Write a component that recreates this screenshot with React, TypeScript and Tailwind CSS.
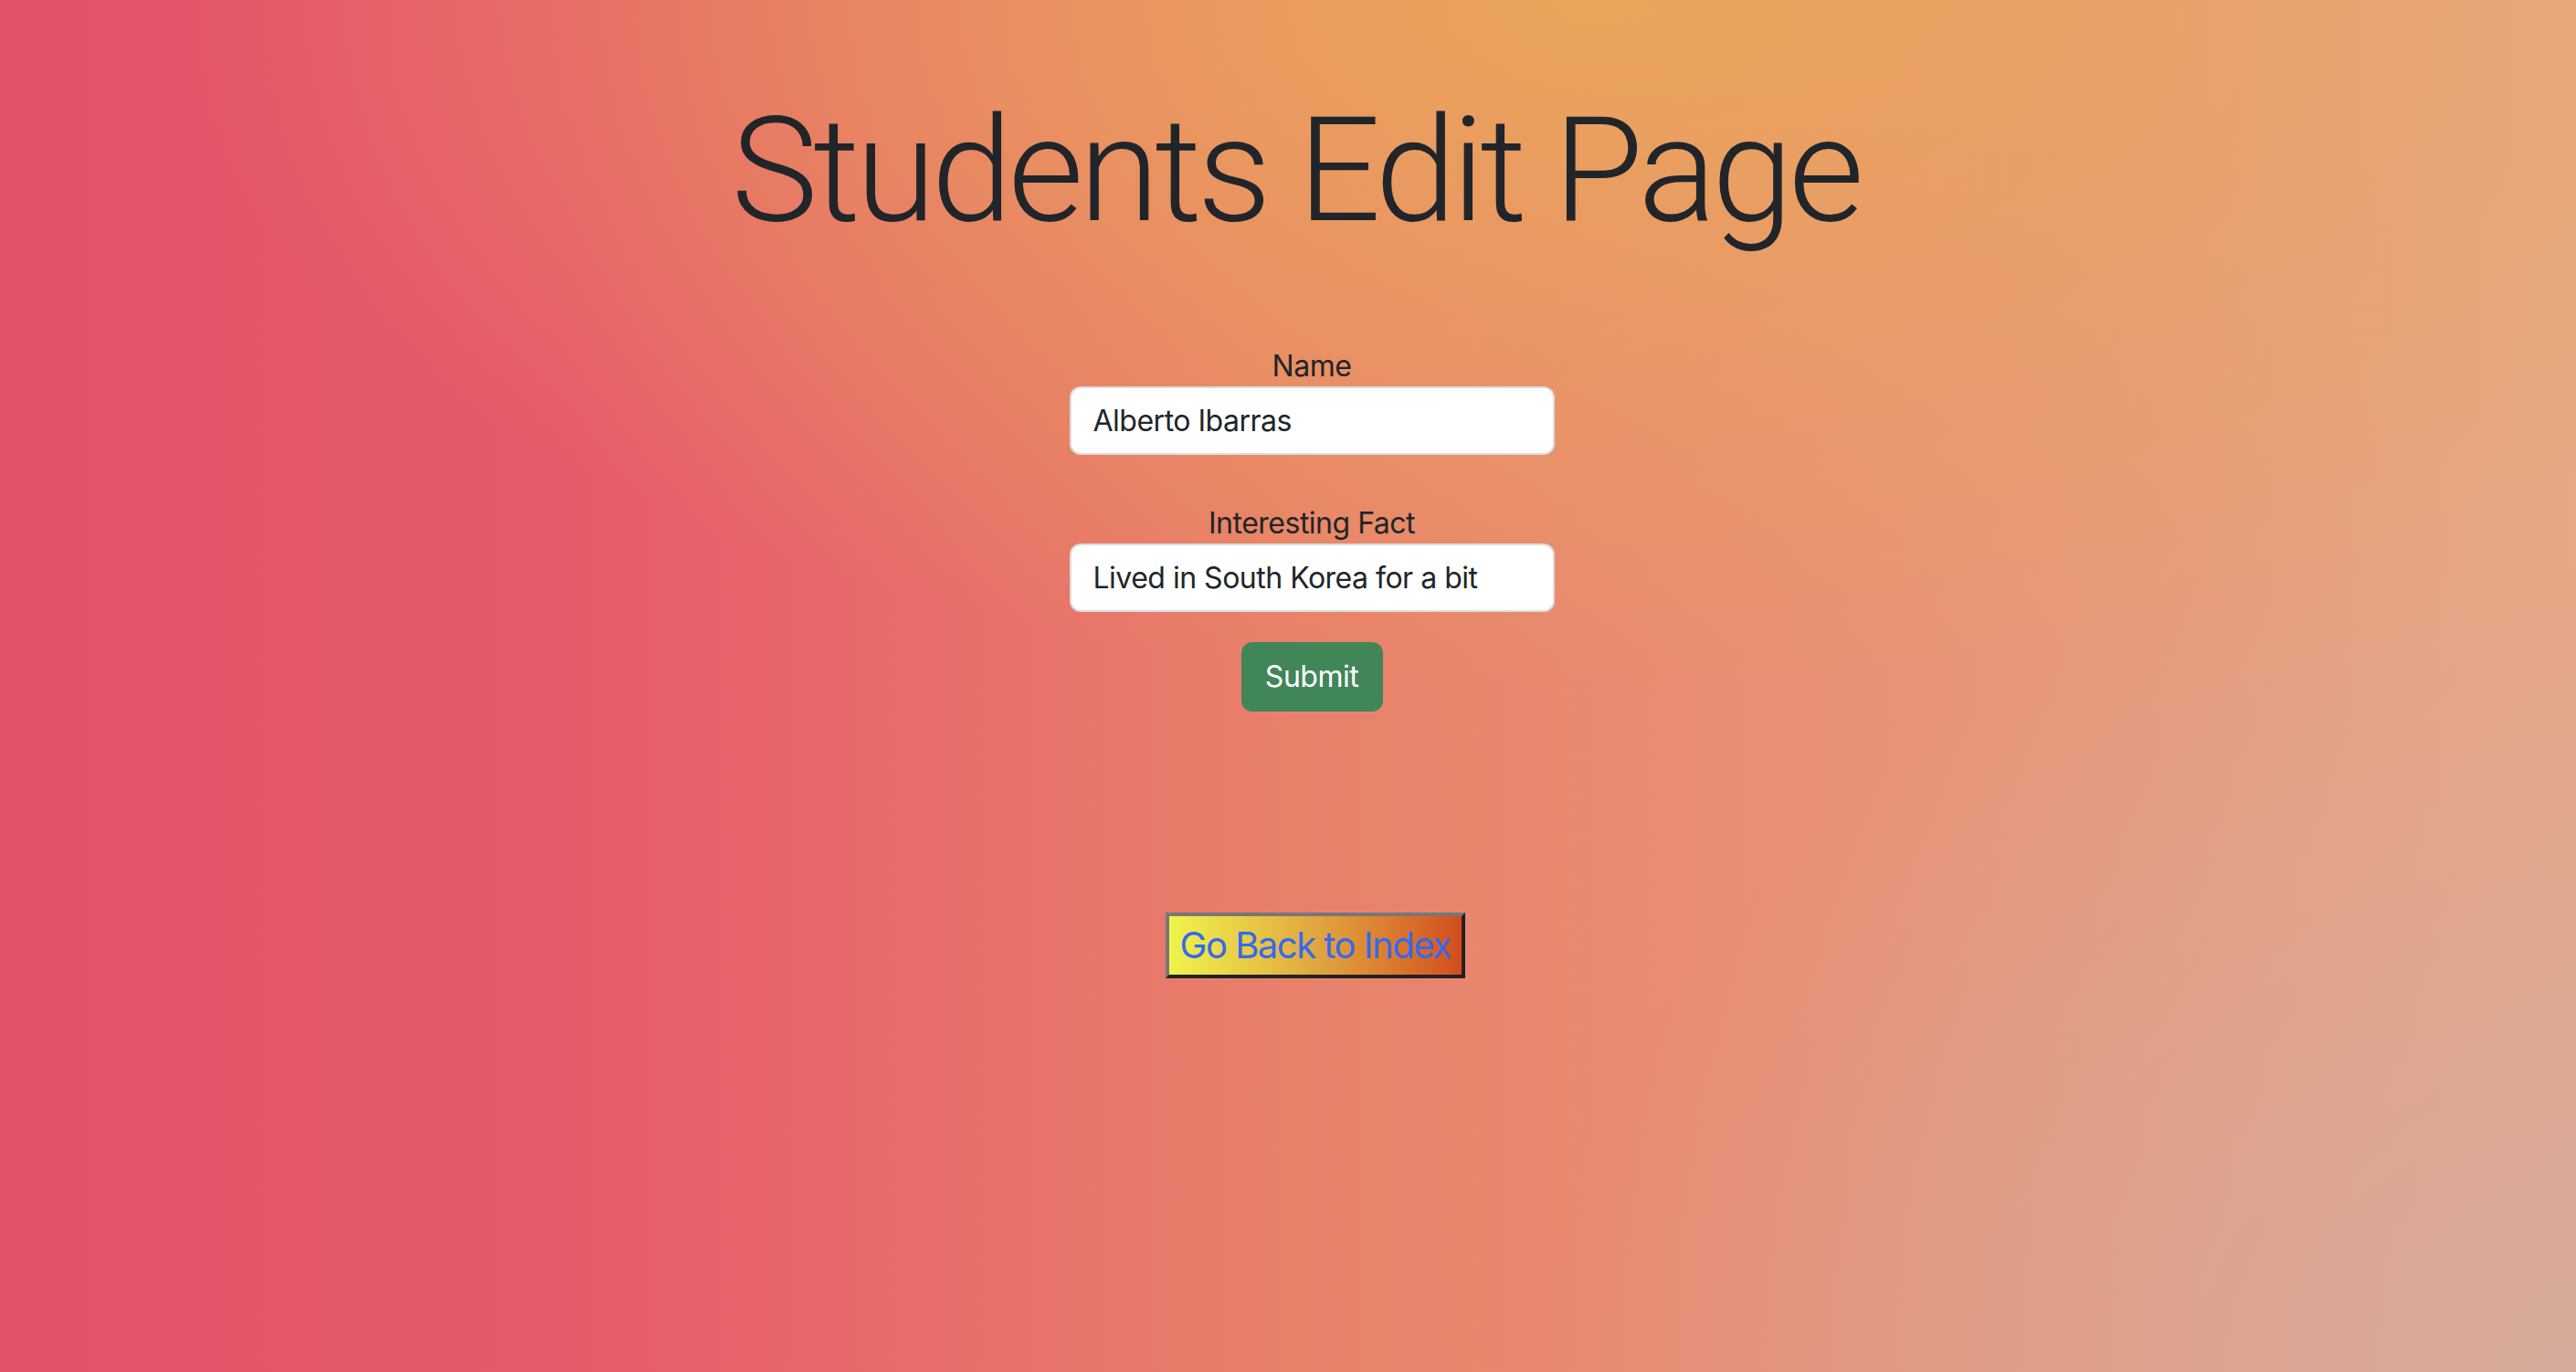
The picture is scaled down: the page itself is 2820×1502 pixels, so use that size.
import React from 'react';

const fields = [
  { label: 'Name', value: 'Alberto Ibarras' },
  { label: 'Interesting Fact', value: 'Lived in South Korea for a bit' },
];

export default function App() {
  return (
    <div className="min-h-screen w-full bg-[image:radial-gradient(ellipse_55%_50%_at_62%_0%,rgba(234,166,90,0.95),rgba(234,166,90,0)),radial-gradient(ellipse_40%_60%_at_100%_100%,rgba(210,170,160,0.8),rgba(210,170,160,0)),linear-gradient(to_right,#e4516a,#e55a6a_22%,#e8806a_50%,#e6a886)] font-['Inter',sans-serif] tracking-[-0.5px] text-[#212529]">
      <h1 className="pt-[91px] pl-[16px] text-center font-['Roboto',sans-serif] text-[160px] font-light leading-[1.2] tracking-[-5px] text-[#212529]">
        Students Edit Page
      </h1>

      <form className="mt-[100px] flex flex-col items-center pl-[52px]">
        {fields.map((f, i) => (
          <div key={f.label} className={'flex flex-col items-center ' + (i > 0 ? 'mt-[57px]' : '')}>
            <label className="block text-[32px] leading-[36px]">{f.label}</label>
            <input
              type="text"
              defaultValue={f.value}
              className="mt-[4px] h-[75px] w-[531px] rounded-[12px] border-2 border-[#dcdcdc] bg-white px-[24px] text-[32px] tracking-[-0.5px] text-[#212529] outline-none"
            />
          </div>
        ))}
        <button
          type="button"
          className="mt-[33px] h-[76px] w-[155px] rounded-[12px] bg-[#418659] text-[32px] text-white"
        >
          Submit
        </button>
      </form>

      <div className="mt-[220px] flex justify-center pl-[60px]">
        <button
          type="button"
          className="flex h-[72px] w-[328px] items-center justify-center whitespace-nowrap border-4 border-t-[#777777] border-l-[#777777] border-r-[#222222] border-b-[#222222] bg-linear-to-r from-[#eef54c] via-[#e0a640] to-[#d24c1f] text-[40px] tracking-[-1.5px] text-[#3469ee]"
        >
          Go Back to Index
        </button>
      </div>
    </div>
  );
}
